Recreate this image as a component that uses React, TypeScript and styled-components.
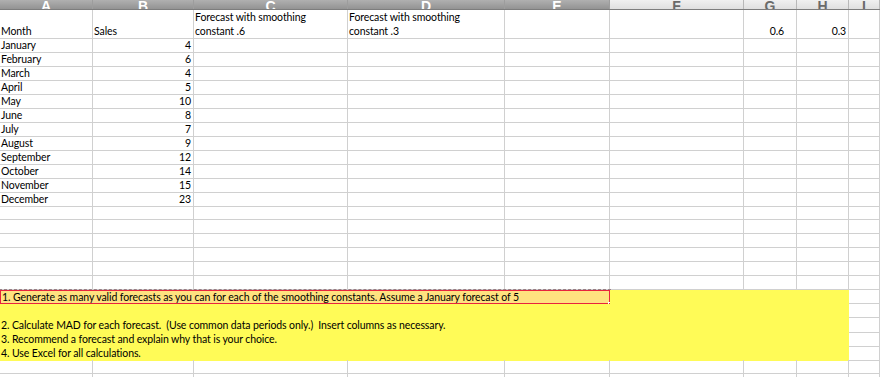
import React from "react";
import styled, { createGlobalStyle, css } from "styled-components";

const COLS = "93px 101px 154px 157px 105px 134px 53px 52px 1fr";
const YELLOW = "#fffb57";
const GRID = "#d0d0d0";

const GlobalStyle = createGlobalStyle`
    html, body {
        margin: 0;
        padding: 0;
        background: #ffffff;
    }
    body {
        font-family: Lato, "Open Sans", sans-serif;
        font-size: 10.5px;
        letter-spacing: -0.1px;
        color: #000000;
        overflow: hidden;
    }
`;

const headers = [
    { label: "A", active: true },
    { label: "B", active: true },
    { label: "C", active: true },
    { label: "D", active: true },
    { label: "E", active: true },
    { label: "F", active: false },
    { label: "G", active: false },
    { label: "H", active: false },
    { label: "I", active: false },
];

const sales: [string, number][] = [
    ["January", 4],
    ["February", 6],
    ["March", 4],
    ["April", 5],
    ["May", 10],
    ["June", 8],
    ["July", 7],
    ["August", 9],
    ["September", 12],
    ["October", 14],
    ["November", 15],
    ["December", 23],
];

const notes = [
    "",
    "2. Calculate MAD for each forecast.  (Use common data periods only.)  Insert columns as necessary.",
    "3. Recommend a forecast and explain why that is your choice.",
    "4. Use Excel for all calculations.",
];

const EMPTY_ROWS = 6;

function Blank({ count }: { count: number }) {
    return (
        <>
            {Array.from({ length: count }).map((_, i) => (
                <Cell key={i} />
            ))}
        </>
    );
}

const App: React.FC = () => {
    return (
        <Sheet>
            <GlobalStyle />
            <HeaderRow>
                {headers.map((h) => (
                    <HeaderCell key={h.label} $active={h.active}>
                        {h.label}
                    </HeaderCell>
                ))}
            </HeaderRow>

            <TallRow>
                <Cell>Month</Cell>
                <Cell>Sales</Cell>
                <Cell>
                    <span>
                        Forecast with smoothing
                        <br />
                        constant .6
                    </span>
                </Cell>
                <Cell>
                    <span>
                        Forecast with smoothing
                        <br />
                        constant .3
                    </span>
                </Cell>
                <Cell />
                <Cell />
                <Cell $align="right" $pad={12}>
                    0.6
                </Cell>
                <Cell $align="right">0.3</Cell>
                <Cell />
            </TallRow>

            {sales.map(([month, value]) => (
                <Row key={month}>
                    <Cell>{month}</Cell>
                    <Cell $align="right">{value}</Cell>
                    <Blank count={7} />
                </Row>
            ))}

            {Array.from({ length: EMPTY_ROWS }).map((_, i) => (
                <Row key={"e" + i}>
                    <Blank count={9} />
                </Row>
            ))}

            <Row>
                <SelectedCell $span={5}>
                    1. Generate as many valid forecasts as you can for each of the smoothing constants. Assume a January forecast of 5
                    <FillHandle />
                </SelectedCell>
                <Cell $fill $span={3} />
                <Cell />
            </Row>

            {notes.map((text, i) => (
                <Row key={"n" + i}>
                    <Cell $fill $span={8}>
                        {text}
                    </Cell>
                    <Cell />
                </Row>
            ))}

            {Array.from({ length: 2 }).map((_, i) => (
                <Row key={"t" + i}>
                    <Blank count={9} />
                </Row>
            ))}
        </Sheet>
    );
};

export default App;

const Sheet = styled.div`
    width: 880px;
    height: 377px;
    overflow: hidden;
    display: flex;
    flex-direction: column;
`;

const Row = styled.div`
    display: grid;
    grid-template-columns: ${COLS};
    height: 14px;
    flex: none;
`;

const TallRow = styled(Row)`
    height: 28px;
`;

const HeaderRow = styled(Row)`
    height: 10px;
    border-bottom: 1px solid #7d7d7d;
    box-sizing: border-box;
    overflow: hidden;
`;

const HeaderCell = styled.div<{ $active: boolean }>`
    display: flex;
    align-items: flex-end;
    justify-content: center;
    overflow: hidden;
    font-family: "Liberation Sans", Arial, sans-serif;
    font-size: 14px;
    line-height: 14px;
    letter-spacing: 0;
    font-weight: bold;
    box-sizing: border-box;
    margin-bottom: -4px;
    ${({ $active }) =>
        $active
            ? css`
                  background: linear-gradient(#b0b0b0, #868686);
                  color: #ffffff;
                  border-right: 1px solid #9d9d9d;
              `
            : css`
                  background: linear-gradient(#f0f0f0, #d8d8d8);
                  color: #6a6a6a;
                  border-right: 1px solid #b8b8b8;
              `}
`;

const Cell = styled.div<{
    $align?: "left" | "right";
    $pad?: number;
    $fill?: boolean;
    $span?: number;
}>`
    position: relative;
    display: flex;
    align-items: flex-end;
    justify-content: ${({ $align }) => ($align === "right" ? "flex-end" : "flex-start")};
    text-align: ${({ $align }) => $align || "left"};
    padding: 0 ${({ $pad }) => $pad ?? 2}px 0 1px;
    box-sizing: border-box;
    line-height: 14px;
    white-space: ${({ $span }) => ($span ? "pre" : "nowrap")};
    grid-column: span ${({ $span }) => $span || 1};
    border-right: 1px solid ${({ $fill }) => ($fill ? YELLOW : GRID)};
    border-bottom: 1px solid ${({ $fill }) => ($fill ? YELLOW : GRID)};
    background: ${({ $fill }) => ($fill ? YELLOW : "transparent")};
`;

const SelectedCell = styled.div<{ $span: number }>`
    position: relative;
    grid-column: span ${({ $span }) => $span};
    display: flex;
    align-items: center;
    padding-left: 1px;
    box-sizing: border-box;
    white-space: pre;
    line-height: 12px;
    background: #ffe27f;
    border: 1px solid #e8233d;
    outline: 1px dashed #9a7f86;
`;

const FillHandle = styled.span`
    position: absolute;
    right: -4px;
    bottom: -4px;
    width: 5px;
    height: 5px;
    background: #e8233d;
    border: 1px solid #ffffff;
    box-sizing: border-box;
`;
